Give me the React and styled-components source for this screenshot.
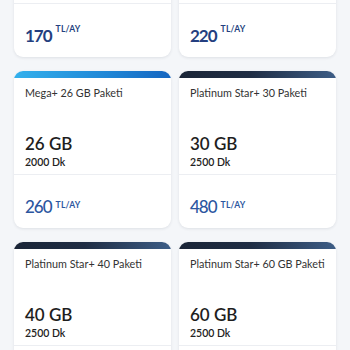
import React from "react";
import styled, { createGlobalStyle } from "styled-components";

const GlobalStyle = createGlobalStyle`
	html, body {
		margin: 0;
		padding: 0;
		background: #f4f6f9;
		font-family: Lato, "Open Sans", sans-serif;
		overflow: hidden;
	}
`;

const packages = [
	{ title: "Mega+ 16 GB Paketi", gb: "16 GB", dk: "1000 Dk", price: 170, tone: "sky", featured: true },
	{ title: "Platinum Star+ 20 Paketi", gb: "20 GB", dk: "2000 Dk", price: 220, tone: "navy", featured: true },
	{ title: "Mega+ 26 GB Paketi", gb: "26 GB", dk: "2000 Dk", price: 260, tone: "sky" },
	{ title: "Platinum Star+ 30 Paketi", gb: "30 GB", dk: "2500 Dk", price: 480, tone: "navy" },
	{ title: "Platinum Star+ 40 Paketi", gb: "40 GB", dk: "2500 Dk", price: 520, tone: "navy" },
	{ title: "Platinum Star+ 60 GB Paketi", gb: "60 GB", dk: "2500 Dk", price: 640, tone: "navy" },
];

const gradients = {
	sky: "linear-gradient(90deg, #33b0ec 0%, #1f86d6 60%, #1565c0 100%)",
	navy: "linear-gradient(90deg, #1a2537 0%, #1f2d44 45%, #3d5d86 100%)",
};

function App() {
	return (
		<>
			<GlobalStyle />
			<Grid>
				{packages.map((p) => (
					<Card key={p.title}>
						<TopBar $tone={p.tone} />
						<Info>
							<Title>{p.title}</Title>
							<Amounts>
								<Data>{p.gb}</Data>
								<Minutes>{p.dk}</Minutes>
							</Amounts>
						</Info>
						<PriceRow>
							<Price $featured={p.featured}>
								{p.price}
								<Unit $featured={p.featured}>TL/AY</Unit>
							</Price>
						</PriceRow>
					</Card>
				))}
			</Grid>
		</>
	);
}

export default App;

const Grid = styled.div`
	display: grid;
	grid-template-columns: 157px 157px;
	column-gap: 8px;
	row-gap: 14px;
	padding-left: 14px;
	margin-top: -100px;
`;

const Card = styled.div`
	display: flex;
	flex-direction: column;
	height: 157px;
	background: #fff;
	border-radius: 9px;
	overflow: hidden;
	box-shadow: 0 1px 3px rgba(30, 40, 60, 0.1);
`;

const TopBar = styled.div`
	height: 7px;
	flex-shrink: 0;
	background: ${(p) => gradients[p.$tone]};
`;

const Info = styled.div`
	display: flex;
	flex-direction: column;
	height: 97px;
	flex-shrink: 0;
	box-sizing: border-box;
	padding: 8px 11px 5px;
	border-bottom: 1px solid #eceef2;
`;

const Title = styled.div`
	font-size: 10.8px;
	line-height: 14px;
	color: #333;
	white-space: nowrap;
`;

const Amounts = styled.div`
	margin-top: auto;
	display: flex;
	flex-direction: column;
`;

const Data = styled.div`
	font-size: 17px;
	line-height: 22px;
	font-weight: 600;
	color: #1e1e1e;
`;

const Minutes = styled.div`
	font-size: 10.5px;
	line-height: 14px;
	font-weight: 600;
	color: #222;
`;

const PriceRow = styled.div`
	height: 53px;
	box-sizing: border-box;
	padding: 21px 11px 0;
`;

const Price = styled.div`
	font-size: 17px;
	line-height: 22px;
	letter-spacing: -1px;
	font-weight: ${(p) => (p.$featured ? 700 : 500)};
	color: ${(p) => (p.$featured ? "#243f80" : "#2c56a0")};
`;

const Unit = styled.span`
	font-size: 8.5px;
	line-height: 0;
	font-weight: 700;
	letter-spacing: 0.2px;
	margin-left: 4px;
	vertical-align: ${(p) => (p.$featured ? "10px" : "5px")};
`;
